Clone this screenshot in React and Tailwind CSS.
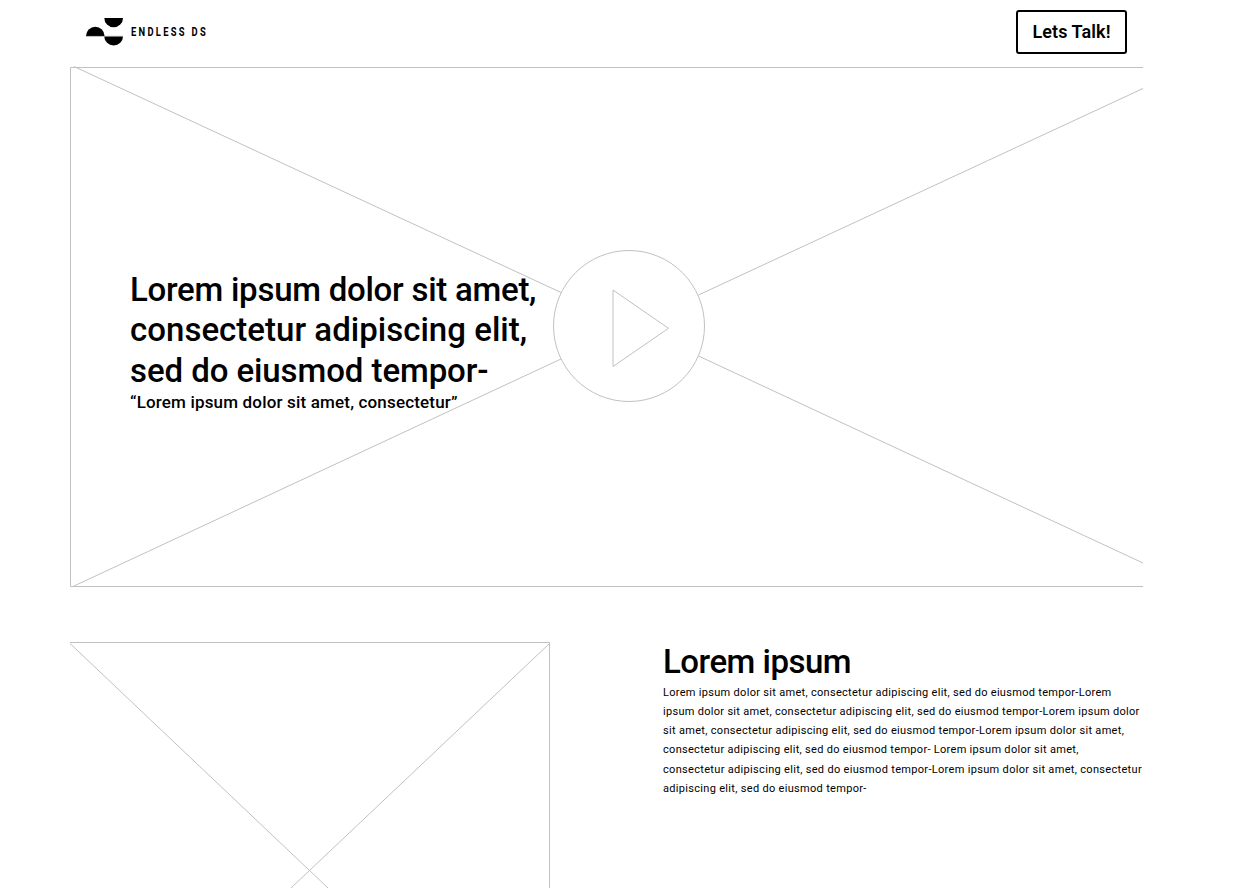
const heroLines = [
  { text: 'Lorem ipsum dolor sit amet,', tracking: 'tracking-[-0.26px]' },
  { text: 'consectetur adipiscing elit,', tracking: 'tracking-[0.02px]' },
  { text: 'sed do eiusmod tempor-', tracking: 'tracking-[-0.08px]' },
];

const bodyLines = [
  { text: 'Lorem ipsum dolor sit amet, consectetur adipiscing elit, sed do eiusmod tempor-Lorem', tracking: 'tracking-[0.3px]' },
  { text: 'ipsum dolor sit amet, consectetur adipiscing elit, sed do eiusmod tempor-Lorem ipsum dolor', tracking: 'tracking-[0.295px]' },
  { text: 'sit amet, consectetur adipiscing elit, sed do eiusmod tempor-Lorem ipsum dolor sit amet,', tracking: 'tracking-[0.31px]' },
  { text: 'consectetur adipiscing elit, sed do eiusmod tempor- Lorem ipsum dolor sit amet,', tracking: 'tracking-[0.3px]' },
  { text: 'consectetur adipiscing elit, sed do eiusmod tempor-Lorem ipsum dolor sit amet, consectetur', tracking: 'tracking-[0.32px]' },
  { text: 'adipiscing elit, sed do eiusmod tempor-', tracking: 'tracking-[0.31px]' },
];

function Lines({ lines }) {
  return lines.map((line) => (
    <span key={line.text} className={`block whitespace-nowrap ${line.tracking}`}>
      {line.text}
    </span>
  ));
}

function Logo() {
  return (
    <div className="flex items-center gap-2 pt-px">
      <svg className="h-7 w-[37px]" viewBox="0 0 37 28" aria-hidden="true">
        <path d="M18.3 0H37a9.35 9.2 0 0 1-18.7 0Z" />
        <path d="M0 18a9.3 9.2 0 0 1 18.6 0Z" />
        <path d="M18.3 18.4H37a9.35 9.1 0 0 1-18.7 0Z" />
        <path d="M0 18.3H37" stroke="#777" strokeWidth=".6" />
      </svg>
      <span className="inline-block origin-left scale-x-[0.72] text-[13px] leading-7 font-bold tracking-[3.2px] whitespace-nowrap">
        ENDLESS DS
      </span>
    </div>
  );
}

function HeroArt() {
  return (
    <svg className="absolute inset-0 h-[521px] w-[1073px]" viewBox="70 66 1073 521" fill="none" stroke="#c1c1c1" aria-hidden="true">
      <path d="M1143 67.5H70.5V586.5H1143" />
      <path d="M74 66.5L561 292.5M698.5 295L1143 88.500M74 586L561 359M698.500 356L1143 563" />
      <circle cx="629" cy="326" r="75.5" />
      <path d="M613 290L668.500 328.300L613 366.500Z" />
    </svg>
  );
}

export default function App() {
  return (
    <div className="h-[888px] overflow-hidden bg-white pl-[70px] font-['Roboto',sans-serif] text-black">
      <div className="w-[1073px]">
        <header className="flex h-[66px] items-start justify-between pr-4 pl-4">
          <div className="pt-[17px]"><Logo /></div>
          <button className="mt-[10px] h-11 w-[111px] rounded-[3px] border-2 border-black pb-0.5 text-[18px] font-semibold tracking-[0.1px] whitespace-nowrap">
            Lets Talk!
          </button>
        </header>
        <section className="relative h-[521px] pt-[204px] pl-[60px]">
          <HeroArt />
          <div className="relative">
            <h1 className="text-[33px] leading-[40.4px] font-medium">
              <Lines lines={heroLines} />
            </h1>
            <p className="text-[17px] leading-[22px] font-medium tracking-[0.17px] whitespace-nowrap">“Lorem ipsum dolor sit amet, consectetur”</p>
          </div>
        </section>
        <section className="flex justify-between pt-[55px]">
          <svg className="h-[246px] w-[481px]" viewBox="70 642 481 246" fill="none" stroke="#c1c1c1" aria-hidden="true">
            <path d="M70 642.5H549.5V888" />
            <path d="M70 643.500L328 888M550 643L291 888" />
          </svg>
          <article className="w-[480px] pt-px">
            <h2 className="text-[33px] leading-[38px] font-medium tracking-[-0.5px] whitespace-nowrap">Lorem ipsum</h2>
            <p className="pt-[2px] text-[11px] leading-[19.150px]">
              <Lines lines={bodyLines} />
            </p>
          </article>
        </section>
      </div>
    </div>
  );
}
